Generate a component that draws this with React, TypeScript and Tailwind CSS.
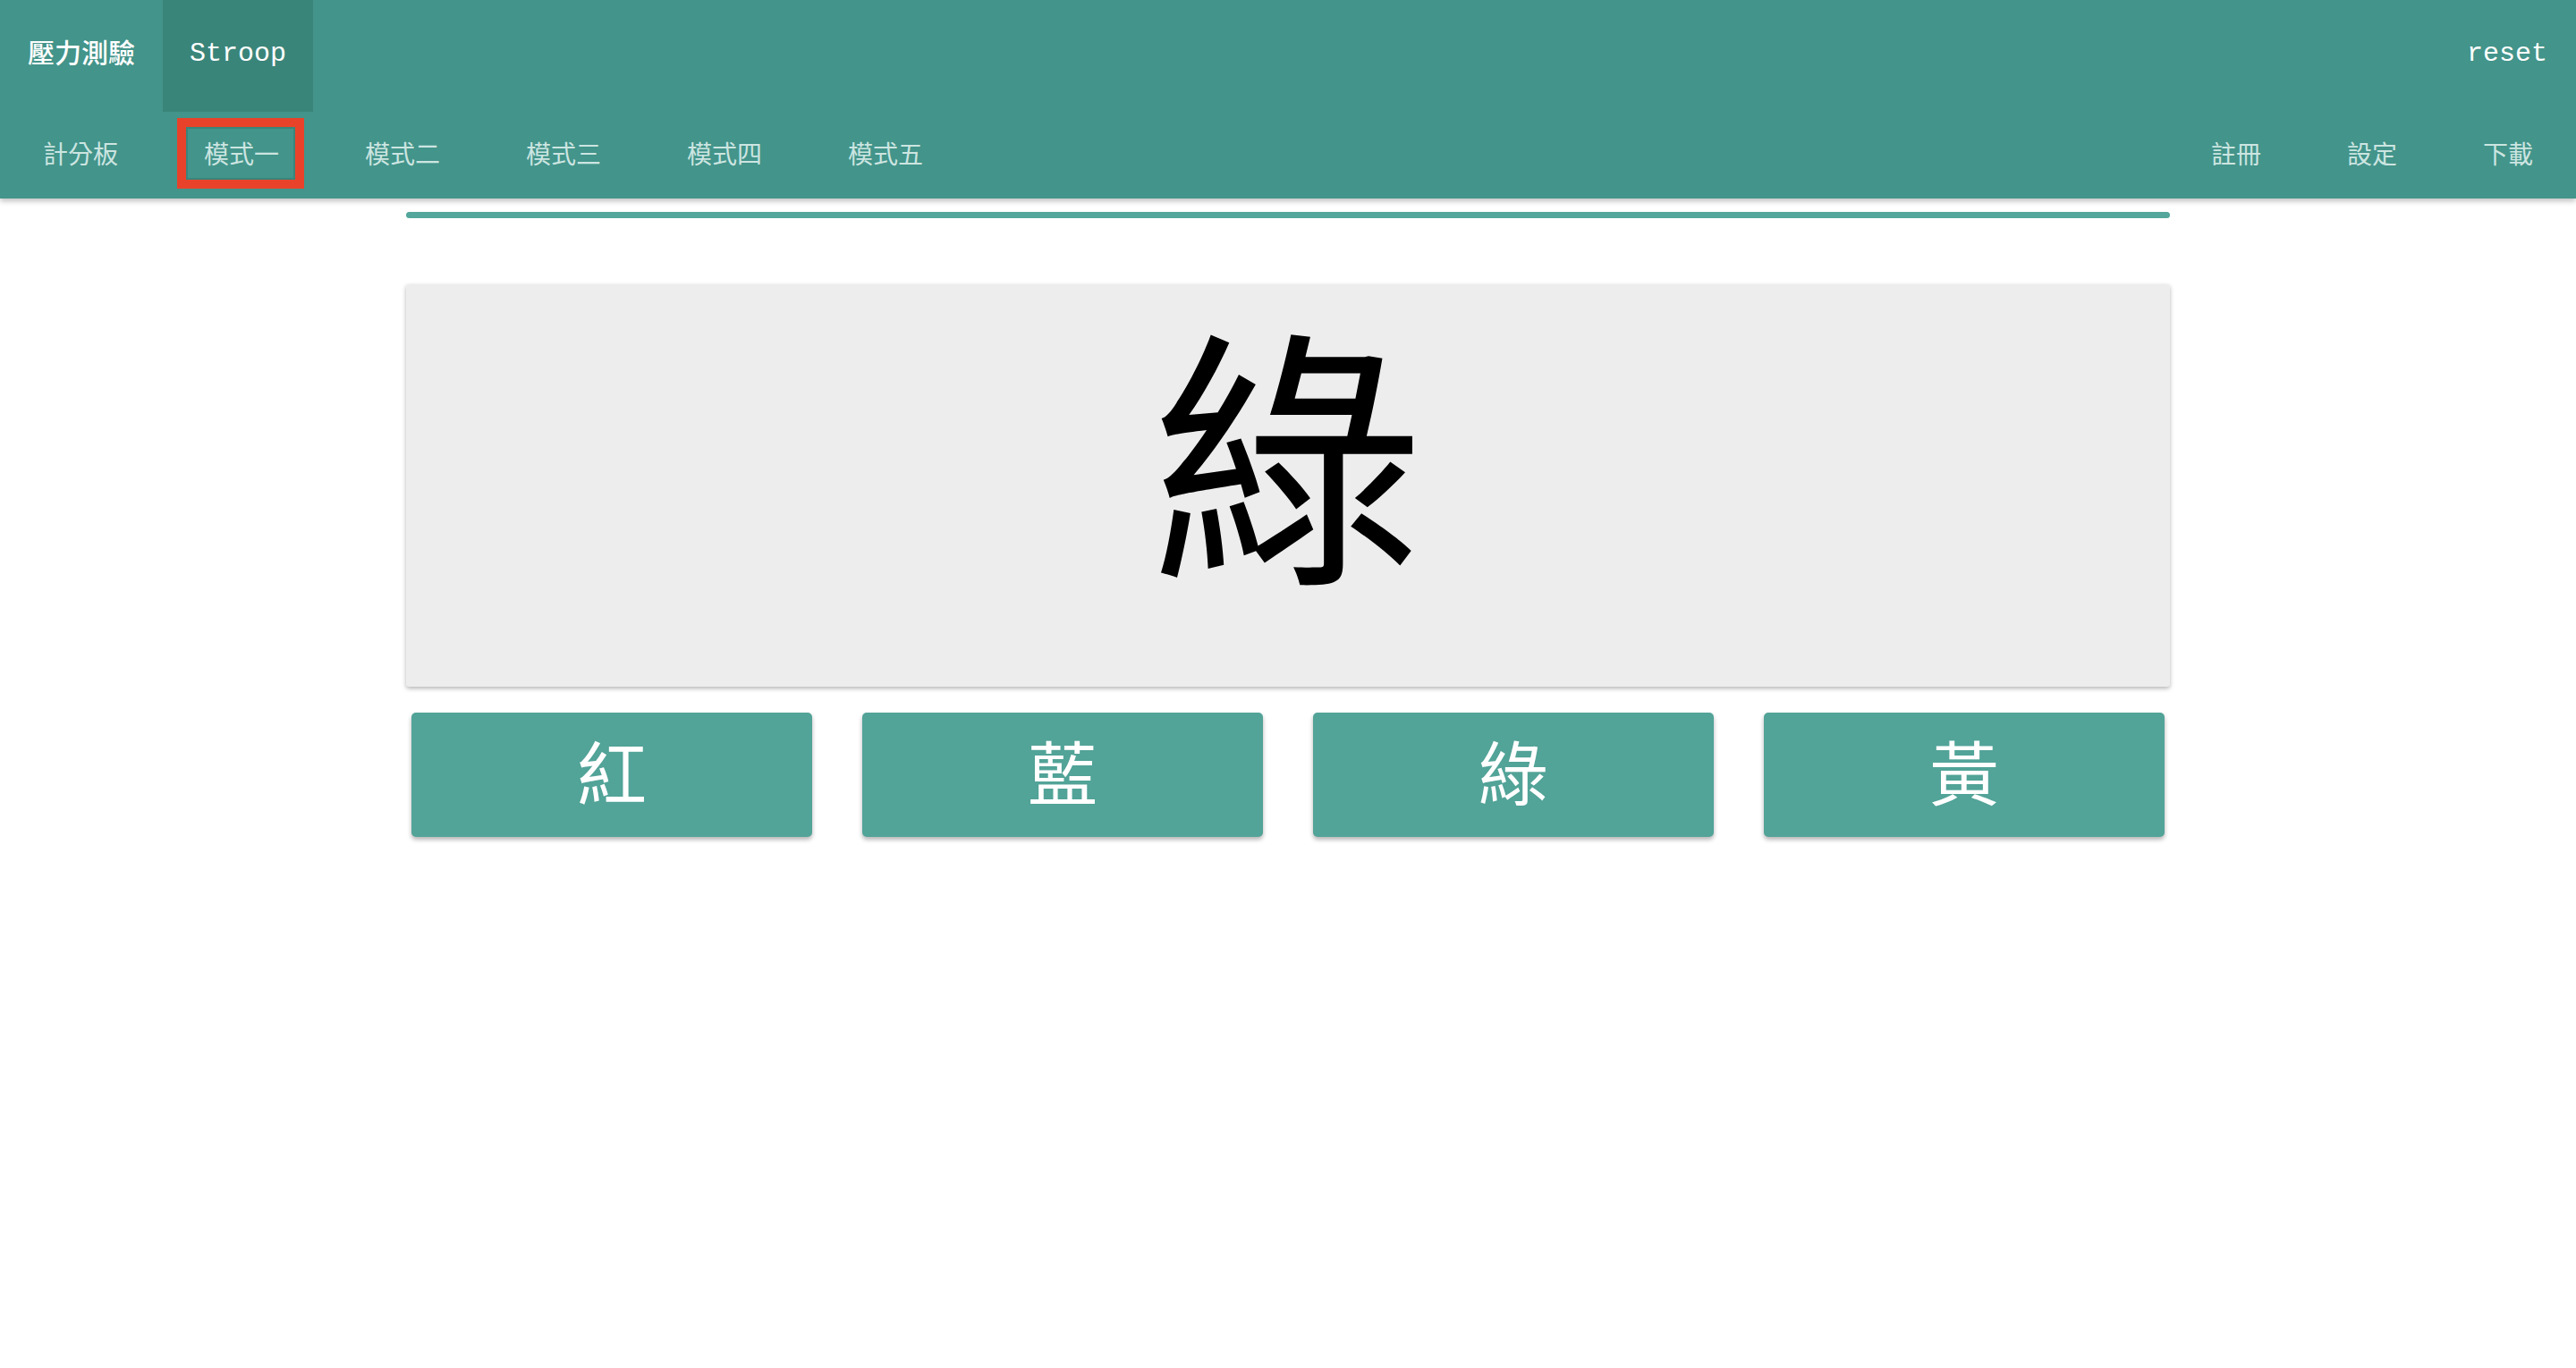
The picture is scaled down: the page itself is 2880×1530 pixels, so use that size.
const cjk = "font-['Noto_Sans_CJK_TC','Noto_Sans',sans-serif]";

const modes = ["計分板", "模式一", "模式二", "模式三", "模式四", "模式五"];
const rightTabs = ["註冊", "設定", "下載"];
const answers = ["紅", "藍", "綠", "黃"];

export default function App() {
  return (
    <div className={`min-h-[1530px] w-full bg-white ${cjk}`}>
      <header className="bg-[#43948a] shadow-[0_3px_6px_rgba(0,0,0,0.25)]">
        <div className="flex h-[125px] items-stretch pb-[4px]">
          <div className="flex items-center pb-[6px] pl-[31px] pr-[31px] text-[30px] font-medium text-white">
            壓力測驗
          </div>
          <div className="-mb-[4px] flex items-center bg-[#3a857a] px-[30px] pb-[4px] font-['Liberation_Mono',monospace] text-[30px] text-white">
            Stroop
          </div>
          <div className="flex-1" />
          <div className="flex items-center pr-[32px] font-['Liberation_Mono',monospace] text-[30px] text-white">
            reset
          </div>
        </div>
        <div className="flex h-[97px] items-stretch">
          {modes.map((m, i) => (
            <div key={m} className="relative flex w-[180px] items-center justify-center pb-[6px] text-[28px] text-[#cce5e1]">
              {m}
              {i === 1 && (
                <div className="absolute left-[18px] top-[7px] h-[79px] w-[142px] border-[10px] border-[#e8432a]">
                  <div className="h-full w-full border-2 border-[#3a857a]" />
                </div>
              )}
            </div>
          ))}
          <div className="flex-1" />
          {rightTabs.map((t) => (
            <div key={t} className="flex w-[152px] items-center justify-center pb-[6px] text-[28px] text-[#cce5e1]">
              {t}
            </div>
          ))}
        </div>
      </header>

      <main className="mx-auto w-[1972px]">
        <div className="mt-[15px] h-[7px] rounded-full bg-[#52a69b]" />

        <div className="mt-[74px] flex h-[450px] items-center justify-center rounded-[3px] bg-[#ededed] pb-[90px] shadow-[0_2px_5px_rgba(0,0,0,0.3)]">
          <span className="text-[304px] leading-none text-black">綠</span>
        </div>

        <div className="mt-[29px] grid grid-cols-4 gap-[56px] px-[6px]">
          {answers.map((a) => (
            <button
              key={a}
              className="flex h-[139px] items-center justify-center rounded-[5px] bg-[#52a398] pb-[12px] text-[78px] leading-none text-white shadow-[0_3px_5px_rgba(0,0,0,0.3)]"
            >
              {a}
            </button>
          ))}
        </div>
      </main>
    </div>
  );
}
